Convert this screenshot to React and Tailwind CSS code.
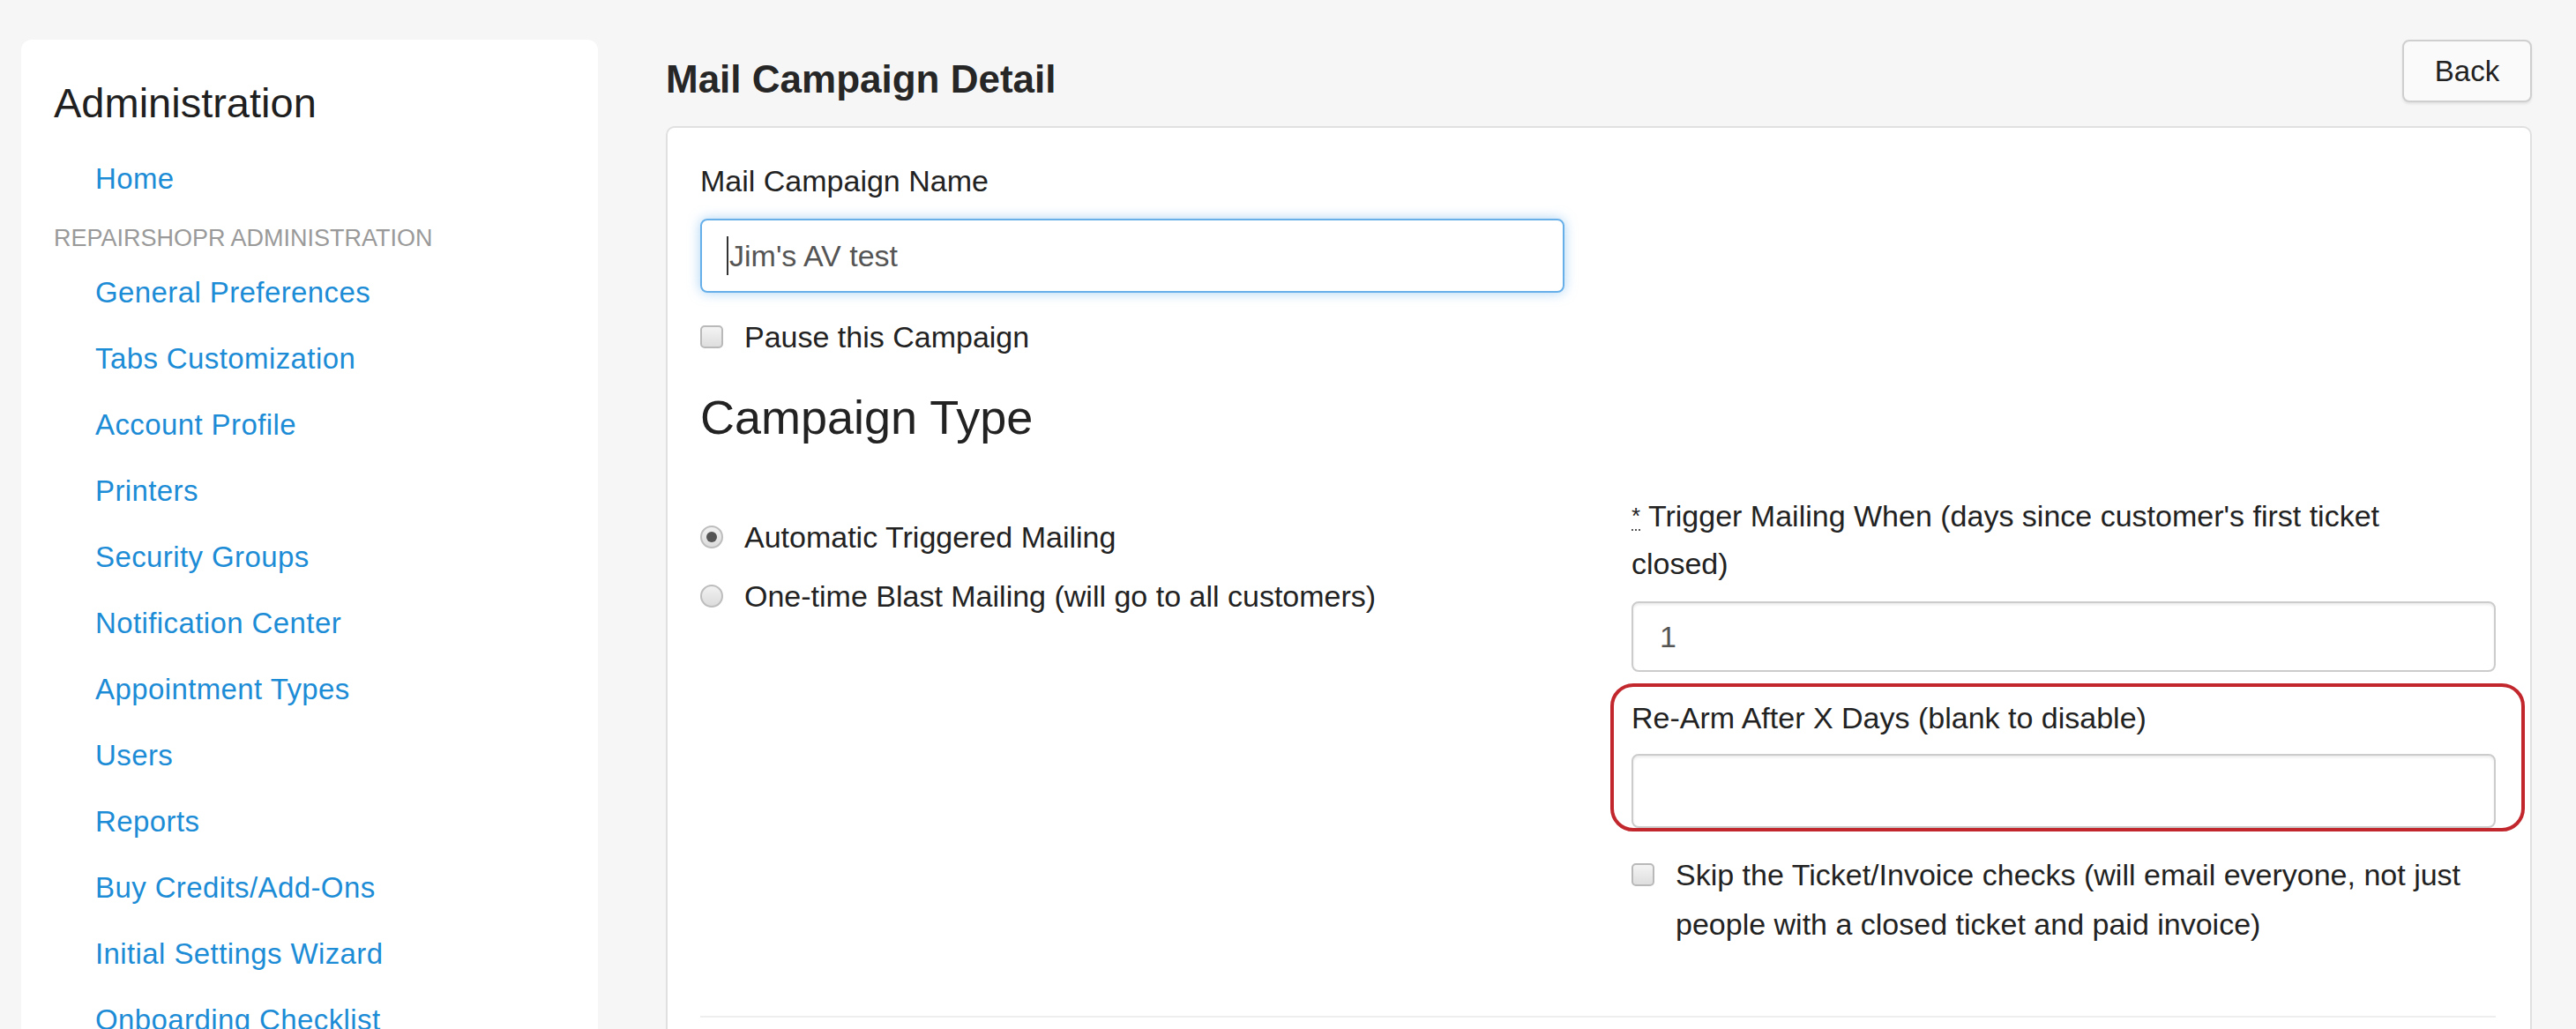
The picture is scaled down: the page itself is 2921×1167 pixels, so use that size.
import React from "react";

const links = [
  "General Preferences",
  "Tabs Customization",
  "Account Profile",
  "Printers",
  "Security Groups",
  "Notification Center",
  "Appointment Types",
  "Users",
  "Reports",
  "Buy Credits/Add-Ons",
  "Initial Settings Wizard",
  "Onboarding Checklist",
];

const Checkbox = () => (
  <span className="block w-[26px] h-[26px] shrink-0 rounded-[5px] border-2 border-[#b9b9b9] bg-gradient-to-b from-[#f4f4f4] to-[#dedede]" />
);

const Radio = ({ checked }) => (
  <span className="flex items-center justify-center w-[26px] h-[26px] shrink-0 rounded-full border-2 border-[#bdbdbd] bg-gradient-to-b from-[#f2f2f2] to-[#dcdcdc]">
    {checked && <span className="w-[12px] h-[12px] rounded-full bg-[#555]" />}
  </span>
);

const Sidebar = () => (
  <aside className="w-[654px] shrink-0 self-start bg-white rounded-t-[12px] pt-[44px] pl-[37px] h-[1200px]">
    <h2 className="text-[47px] leading-[56px] text-[#1f1f1f]">Administration</h2>
    <a className="block mt-[20px] pl-[47px] text-[33px] leading-[75px] tracking-[0.4px] text-[#1d8cd6]">Home</a>
    <div className="mt-[10px] text-[27px] leading-[40px] text-[#9a9a9a] uppercase">
      RepairShopr Administration
    </div>
    <ul className="mt-[4px]">
      {links.map((l) => (
        <li key={l}>
          <a className="block pl-[47px] text-[33px] leading-[75px] tracking-[0.4px] text-[#1d8cd6]">{l}</a>
        </li>
      ))}
    </ul>
  </aside>
);

const App = () => {
  return (
    <div className="h-screen overflow-hidden bg-[#f6f6f6] flex pl-[24px] pr-[50px] pt-[45px] gap-[77px] font-['Liberation_Sans',Arial,sans-serif] text-[#222]">
      <Sidebar />

      <main className="flex-1 min-w-0">
        {/* Title row */}
        <div className="flex items-start justify-between">
          <h1 className="mt-[20px] text-[44px] leading-[50px] font-semibold text-[#262626]">
            Mail Campaign Detail
          </h1>
          <button className="w-[147px] h-[71px] rounded-[8px] border-2 border-[#cfcfcf] bg-[#fafafa] text-[33px] text-[#222] shadow-[0_2px_3px_rgba(0,0,0,0.08)]">
            Back
          </button>
        </div>

        {/* Card */}
        <section className="mt-[27px] bg-white border-2 border-[#e0e0e0] rounded-[10px] pl-[37px] pr-[39px] pt-[33px] h-[1100px]">
          <div className="w-[980px]">
            <label className="block text-[34px] leading-[54px]">Mail Campaign Name</label>
            <div className="mt-[16px] h-[84px] rounded-[8px] border-2 border-[#66afe9] shadow-[0_0_14px_rgba(102,175,233,0.55)] flex items-center pl-[28px] text-[34px] text-[#555]">
              <span className="w-[2px] h-[44px] bg-[#333] mr-[1px]" />
              Jim's AV test
            </div>
            <label className="mt-[23px] flex items-center gap-[24px] text-[34px] leading-[54px]">
              <Checkbox />
              Pause this Campaign
            </label>
          </div>

          <h3 className="mt-[32px] text-[54px] leading-[64px] text-[#222]">Campaign Type</h3>

          <div className="mt-[53px] flex gap-[76px]">
            {/* Left column */}
            <div className="w-[980px] shrink-0 pt-[24px]">
              <label className="flex items-center gap-[24px] text-[34px] leading-[54px]">
                <Radio checked />
                Automatic Triggered Mailing
              </label>
              <label className="mt-[13px] flex items-center gap-[24px] text-[34px] leading-[54px]">
                <Radio />
                One-time Blast Mailing (will go to all customers)
              </label>
            </div>

            {/* Right column */}
            <div className="w-[980px] shrink-0">
              <label className="block text-[34px] leading-[54px]">
                <abbr className="no-underline border-b-2 border-dotted border-[#555] text-[26px] align-top">*</abbr>{" "}
                Trigger Mailing When (days since customer's first ticket
                <br />
                closed)
              </label>
              <input
                readOnly
                value="1"
                className="mt-[16px] block w-full h-[80px] rounded-[8px] border-2 border-[#cccccc] shadow-[inset_0_2px_3px_rgba(0,0,0,0.08)] px-[30px] text-[34px] text-[#555] outline-none"
              />

              <div className="mt-[13px] -ml-[24px] -mr-[33px] border-[4px] border-[#c1272d] rounded-[26px] pl-[20px] pr-[29px] pt-[8px]">
                <label className="block text-[34px] leading-[54px]">Re-Arm After X Days (blank to disable)</label>
                <input
                  readOnly
                  value=""
                  className="mt-[14px] block w-full h-[84px] rounded-[8px] border-2 border-[#cccccc] shadow-[inset_0_2px_3px_rgba(0,0,0,0.08)] px-[30px] text-[34px] text-[#555] outline-none"
                />
              </div>

              <label className="mt-[21px] flex items-start gap-[24px] text-[34px] leading-[56px]">
                <span className="block mt-[15px]">
                  <Checkbox />
                </span>
                <span>
                  Skip the Ticket/Invoice checks (will email everyone, not just people with a closed ticket and paid invoice)
                </span>
              </label>
            </div>
          </div>

          <hr className="mt-[76px] border-t-2 border-[#eeeeee]" />
        </section>
      </main>
    </div>
  );
};

export default App;
